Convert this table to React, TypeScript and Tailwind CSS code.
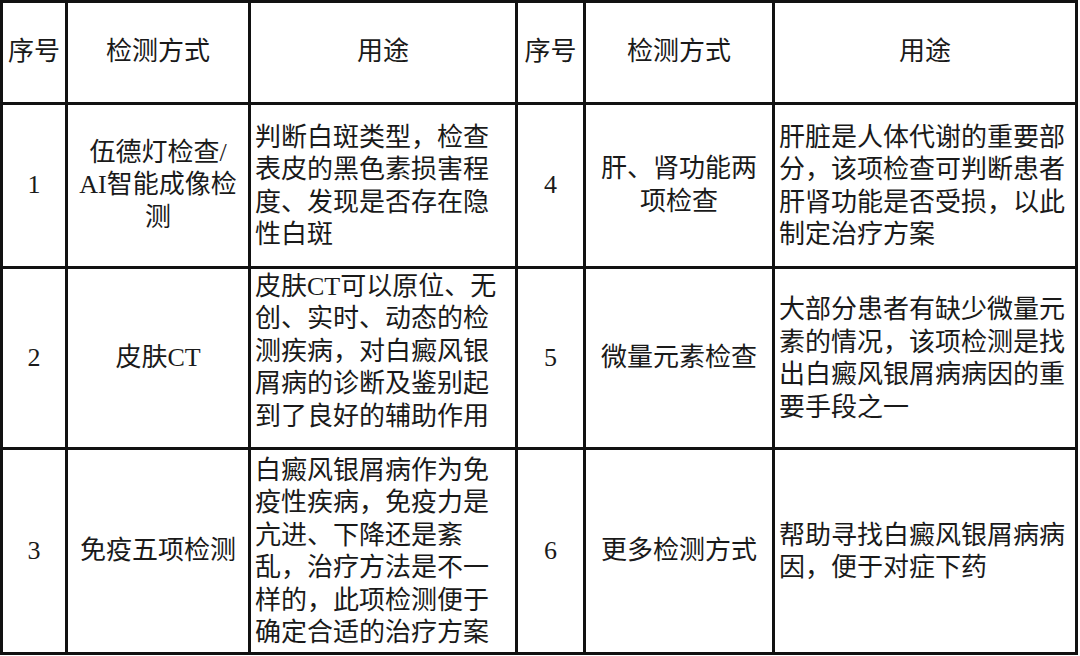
import React from "react";

type Row = {
  n1: string;
  m1: string[];
  u1: string[];
  n2: string;
  m2: string[];
  u2: string[];
};

const rows: Row[] = [
  {
    n1: "1",
    m1: ["伍德灯检查/", "AI智能成像检", "测"],
    u1: ["判断白斑类型，检查", "表皮的黑色素损害程", "度、发现是否存在隐", "性白斑"],
    n2: "4",
    m2: ["肝、肾功能两", "项检查"],
    u2: ["肝脏是人体代谢的重要部", "分，该项检查可判断患者", "肝肾功能是否受损，以此", "制定治疗方案"],
  },
  {
    n1: "2",
    m1: ["皮肤CT"],
    u1: ["皮肤CT可以原位、无", "创、实时、动态的检", "测疾病，对白癜风银", "屑病的诊断及鉴别起", "到了良好的辅助作用"],
    n2: "5",
    m2: ["微量元素检查"],
    u2: ["大部分患者有缺少微量元", "素的情况，该项检测是找", "出白癜风银屑病病因的重", "要手段之一"],
  },
  {
    n1: "3",
    m1: ["免疫五项检测"],
    u1: ["白癜风银屑病作为免", "疫性疾病，免疫力是", "亢进、下降还是紊", "乱，治疗方法是不一", "样的，此项检测便于", "确定合适的治疗方案"],
    n2: "6",
    m2: ["更多检测方式"],
    u2: ["帮助寻找白癜风银屑病病", "因，便于对症下药"],
  },
];

function Center({ lines }: { lines: string[] }) {
  return (
    <div className="bg-white flex flex-col items-center justify-center text-center">
      {lines.map((l, i) => (
        <span key={i} className="block whitespace-nowrap leading-[32.5px]">
          {l}
        </span>
      ))}
    </div>
  );
}

function Left({ lines, up }: { lines: string[]; up?: boolean }) {
  return (
    <div className={"bg-white flex flex-col justify-center pl-[4px] " + (up ? "pb-[12px]" : "pt-[2px]")}>
      {lines.map((l, i) => (
        <span key={i} className="block whitespace-nowrap leading-[32.5px]">
          {l}
        </span>
      ))}
    </div>
  );
}

export default function App() {
  return (
    <div className="w-[1080px] h-[656px] bg-white">
      <div className="grid grid-cols-[62px_180px_264px_65px_186px_300px] grid-rows-[99px_161px_178px_202px] gap-[3px] p-[3px] bg-[#111] w-[1078px] h-[655px] text-[26px] font-normal text-[#1a1a1a] font-['Liberation_Serif','Noto_Sans_CJK_SC',serif]">
        <Center lines={["序号"]} />
        <Center lines={["检测方式"]} />
        <Center lines={["用途"]} />
        <Center lines={["序号"]} />
        <Center lines={["检测方式"]} />
        <Center lines={["用途"]} />
        {rows.map((r, i) => (
          <React.Fragment key={i}>
            <Center lines={[r.n1]} />
            <Center lines={r.m1} />
            <Left lines={r.u1} up={i === 1} />
            <Center lines={[r.n2]} />
            <Center lines={r.m2} />
            <Left lines={r.u2} />
          </React.Fragment>
        ))}
      </div>
    </div>
  );
}
